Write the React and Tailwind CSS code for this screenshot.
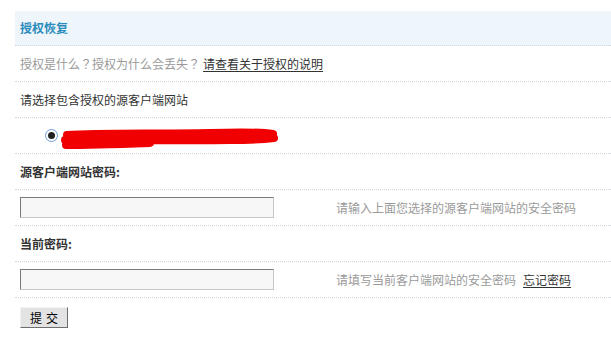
import React from 'react';

const font = { fontFamily: '"Noto Sans CJK SC", "Microsoft YaHei", sans-serif' };

const Row = ({ children, className = '' }) => (
  <div className={`h-[36px] flex items-center pl-[5px] border-b border-dotted border-[#cdd6de] ${className}`}>
    {children}
  </div>
);

const PwdInput = () => (
  <div className="w-[254px] h-[21px] bg-[#f7f7f7] border border-t-[#7a7a7a] border-l-[#7a7a7a] border-r-[#c8c8c8] border-b-[#c8c8c8]" />
);

export default function App() {
  return (
    <div className="w-[611px] h-[357px] bg-white text-[12px] leading-none text-[#333]" style={font}>
      <div className="pt-[11px] pl-[15px]">
        {/* 标题 */}
        <div className="h-[35px] flex items-center pl-[5px] bg-[#eef5fb] border-b border-dotted border-[#cdd6de]">
          <span className="font-bold text-[#2a8cbb]">授权恢复</span>
        </div>

        <Row>
          <span className="text-[#9a9a9a] font-['Noto_Sans_CJK_JP',sans-serif]">授权是什么？授权为什么会丢失？</span>
          <a className="ml-[3px] underline underline-offset-2 text-[#333]">请查看关于授权的说明</a>
        </Row>

        <Row>
          <span>请选择包含授权的源客户端网站</span>
        </Row>

        <Row>
          <div className="ml-[25px] w-[13px] h-[13px] rounded-full border border-[#6b9ed6] bg-white flex items-center justify-center">
            <div className="w-[7px] h-[7px] rounded-full bg-[#222]" />
          </div>
          <svg width="220" height="24" viewBox="0 0 220 24" className="ml-[2px] mt-[8px]">
            <path
              d="M7 7 C40 5, 90 6, 150 5 C180 4, 200 4, 213 6 M5 12 C50 11, 110 13, 170 12 C190 12, 205 11, 214 10 M6 17 C30 17, 60 16, 90 15"
              stroke="#f00000"
              strokeWidth="8"
              strokeLinecap="round"
              fill="none"
            />
          </svg>
        </Row>

        <Row>
          <span className="font-bold">源客户端网站密码:</span>
        </Row>

        <Row>
          <div className="w-[316px] shrink-0">
            <PwdInput />
          </div>
          <span className="text-[#9a9a9a]">请输入上面您选择的源客户端网站的安全密码</span>
        </Row>

        <Row>
          <span className="font-bold">当前密码:</span>
        </Row>

        <Row>
          <div className="w-[316px] shrink-0">
            <PwdInput />
          </div>
          <span className="text-[#9a9a9a]">请填写当前客户端网站的安全密码</span>
          <a className="ml-[7px] underline underline-offset-2 text-[#333]">忘记密码</a>
        </Row>

        <div className="pl-[5px] pt-[9px]">
          <button className="w-[48px] h-[21px] bg-[#e3e3e3] text-[12px] text-black border border-t-[#f2f2f2] border-l-[#f2f2f2] border-r-[#6e6e6e] border-b-[#6e6e6e] tracking-[4px] pl-[4px]">
            提交
          </button>
        </div>
      </div>
    </div>
  );
}
